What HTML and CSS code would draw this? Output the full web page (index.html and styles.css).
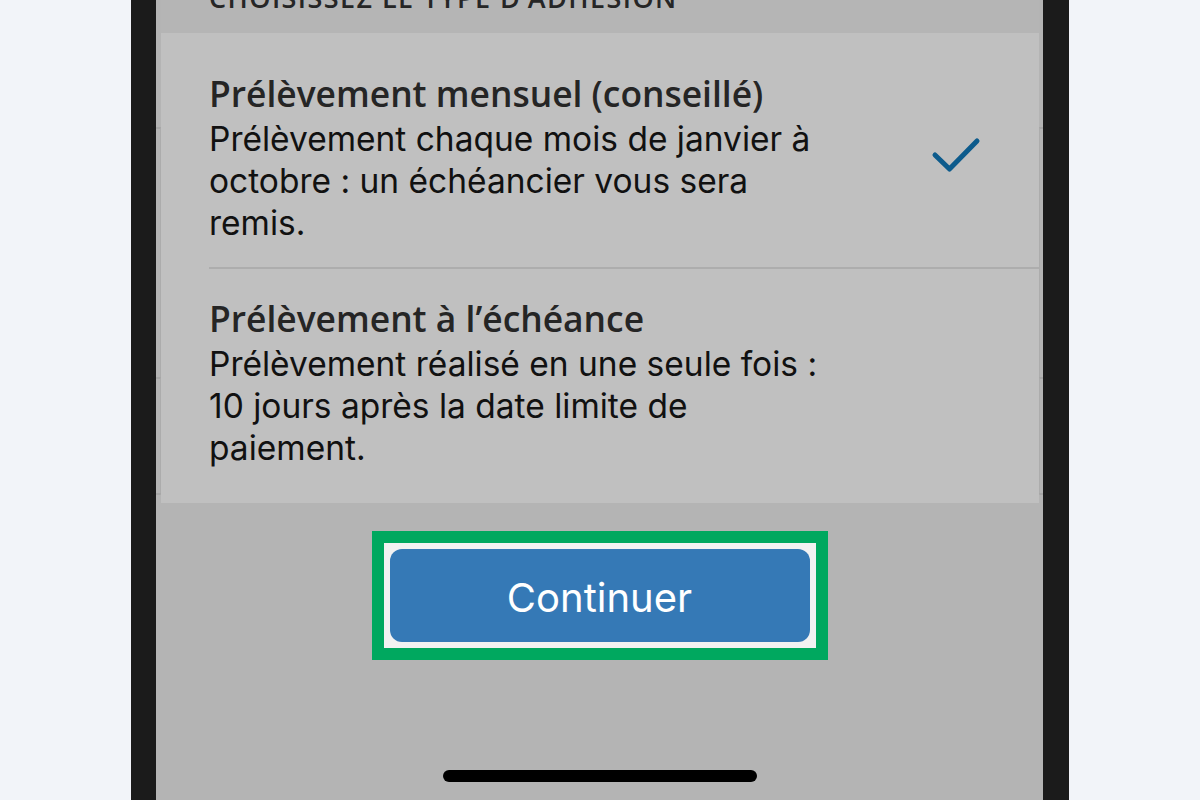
FILE: index.html
```html
<!DOCTYPE html>
<html lang="fr">
<head>
<meta charset="utf-8">
<title>Type d'adhésion</title>
<link rel="stylesheet" href="styles.css">
</head>
<body>
<div class="stage">
  <div class="phone">
    <div class="screen">
      <div class="content">
        <div class="rail rail-left">
          <span class="seg seg-a"></span>
          <span class="seg seg-b"></span>
          <span class="seg seg-c"></span>
        </div>
        <div class="sheet">
          <div class="section-head">
            <div class="section-title">CHOISISSEZ LE TYPE D’ADHÉSION</div>
          </div>
          <div class="options">
            <div class="option option-first">
              <div class="option-text">
                <div class="option-title">Prélèvement mensuel (conseillé)</div>
                <div class="option-desc">Prélèvement chaque mois de janvier à<br>octobre : un échéancier vous sera<br>remis.</div>
              </div>
              <svg class="check" width="50" height="40" viewBox="0 0 50 40" aria-hidden="true">
                <path d="M4 18 L18.5 32 L46 4" fill="none" stroke="#0d5b8c" stroke-width="5" stroke-linecap="round" stroke-linejoin="round"/>
              </svg>
            </div>
            <div class="option option-second">
              <div class="option-text">
                <div class="option-title">Prélèvement à l’échéance</div>
                <div class="option-desc">Prélèvement réalisé en une seule fois :<br>10 jours après la date limite de<br>paiement.</div>
              </div>
            </div>
          </div>
        </div>
        <div class="rail rail-right">
          <span class="seg seg-a"></span>
          <span class="seg seg-b"></span>
          <span class="seg seg-c"></span>
        </div>
      </div>
      <div class="footer">
        <div class="focus-ring">
          <button class="btn" type="button">Continuer</button>
        </div>
      </div>
      <div class="home-bar"></div>
    </div>
  </div>
</div>
</body>
</html>
```
FILE: styles.css
```css
* { box-sizing: border-box; }
html, body { margin: 0; padding: 0; }
body {
  background: #f2f4f9;
  width: 1200px;
  height: 800px;
  overflow: hidden;
  font-family: "Inter", "Liberation Sans", sans-serif;
}
.stage {
  display: flex;
  justify-content: center;
  height: 800px;
}
.phone {
  width: 938px;
  height: 800px;
  background: #1b1b1b;
  padding: 0 26px 0 25px;
}
.screen {
  height: 800px;
  background: #b4b4b4;
  display: flex;
  flex-direction: column;
}
.content {
  display: flex;
  height: 503px;
}
.rail {
  display: flex;
  flex-direction: column;
  padding-top: 127px;
}
.rail-left { width: 5px; }
.rail-right { width: 4px; }
.seg {
  display: block;
  border-top: 2px solid #a6a6a6;
}
.rail-left .seg { border-right: 1px solid #acacac; }
.rail-right .seg { border-left: 1px solid #acacac; }
.seg-a { height: 250px; }
.seg-b { height: 116px; }
.seg-c { height: 2px; }
.sheet {
  flex: 1;
  background: #c0c0c0;
  display: flex;
  flex-direction: column;
}
.section-head {
  height: 33px;
  background: #b5b5b5;
  padding-left: 48px;
  overflow: hidden;
}
.section-title {
  font-family: "Open Sans", "Noto Sans", sans-serif;
  font-weight: 600;
  font-size: 27px;
  line-height: 30px;
  letter-spacing: 1.42px;
  color: #262626;
  margin-top: -17px;
  white-space: nowrap;
}
.options {
  flex: 1;
  display: flex;
  flex-direction: column;
}
.option {
  margin-left: 48px;
  display: flex;
  align-items: center;
}
.option-first {
  padding: 40px 0 23px;
}
.option-second {
  border-top: 2px solid #adadad;
  padding: 29px 0 32px;
}
.option-text {
  width: 722px;
}
.option-title {
  font-family: "Open Sans", "Noto Sans", sans-serif;
  font-weight: 600;
  font-size: 35.4px;
  line-height: 40px;
  color: #252525;
  white-space: nowrap;
}
.option-desc {
  margin-top: 5px;
  font-size: 33.5px;
  line-height: 42px;
  color: #111111;
  white-space: nowrap;
}
.check {
  display: block;
  margin-top: -4px;
}
.footer {
  display: flex;
  justify-content: center;
  padding-top: 28px;
}
.focus-ring {
  border: 12px solid #00a85f;
  background: #f2f2f2;
  padding: 6px;
  width: 456px;
}
.btn {
  display: block;
  width: 100%;
  height: 93px;
  border: none;
  border-radius: 12px;
  background: #3579b6;
  color: #ffffff;
  font-family: "Inter", "Liberation Sans", sans-serif;
  font-size: 40px;
  font-weight: 400;
  padding: 3px 0 0;
}
.home-bar {
  width: 314px;
  height: 12px;
  border-radius: 6px;
  background: #000000;
  margin: 110px auto 0;
}
```
